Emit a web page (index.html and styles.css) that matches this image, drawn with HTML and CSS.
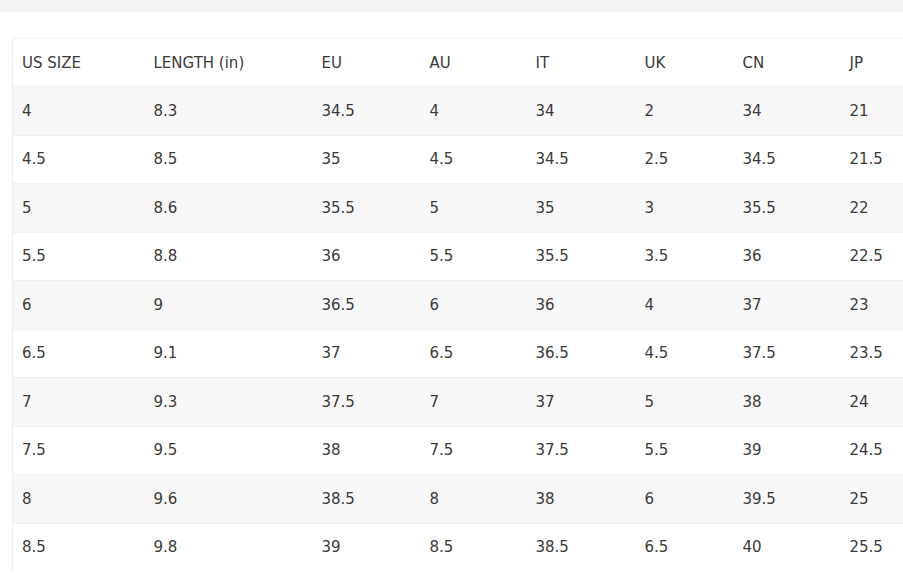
FILE: index.html
```html
<!DOCTYPE html>
<html>
<head>
<meta charset="utf-8">
<link rel="stylesheet" href="styles.css">
</head>
<body>
<div class="topbar"></div>
<div class="wrap">
<table class="sizes">
<colgroup>
<col class="c1"><col class="c2"><col class="c3"><col class="c4"><col class="c5"><col class="c6"><col class="c7"><col class="c8">
</colgroup>
<thead>
<tr><th>US SIZE</th><th>LENGTH (in)</th><th>EU</th><th>AU</th><th>IT</th><th>UK</th><th>CN</th><th>JP</th></tr>
</thead>
<tbody>
<tr><td>4</td><td>8.3</td><td>34.5</td><td>4</td><td>34</td><td>2</td><td>34</td><td>21</td></tr>
<tr><td>4.5</td><td>8.5</td><td>35</td><td>4.5</td><td>34.5</td><td>2.5</td><td>34.5</td><td>21.5</td></tr>
<tr><td>5</td><td>8.6</td><td>35.5</td><td>5</td><td>35</td><td>3</td><td>35.5</td><td>22</td></tr>
<tr><td>5.5</td><td>8.8</td><td>36</td><td>5.5</td><td>35.5</td><td>3.5</td><td>36</td><td>22.5</td></tr>
<tr><td>6</td><td>9</td><td>36.5</td><td>6</td><td>36</td><td>4</td><td>37</td><td>23</td></tr>
<tr><td>6.5</td><td>9.1</td><td>37</td><td>6.5</td><td>36.5</td><td>4.5</td><td>37.5</td><td>23.5</td></tr>
<tr><td>7</td><td>9.3</td><td>37.5</td><td>7</td><td>37</td><td>5</td><td>38</td><td>24</td></tr>
<tr><td>7.5</td><td>9.5</td><td>38</td><td>7.5</td><td>37.5</td><td>5.5</td><td>39</td><td>24.5</td></tr>
<tr><td>8</td><td>9.6</td><td>38.5</td><td>8</td><td>38</td><td>6</td><td>39.5</td><td>25</td></tr>
<tr><td>8.5</td><td>9.8</td><td>39</td><td>8.5</td><td>38.5</td><td>6.5</td><td>40</td><td>25.5</td></tr>
</tbody>
</table>
</div>
</body>
</html>
```
FILE: styles.css
```css
html, body {
  margin: 0;
  padding: 0;
  background: #ffffff;
  overflow: hidden;
}
body {
  font-family: "DejaVu Sans", "Liberation Sans", sans-serif;
  color: #3a3a3a;
  width: 903px;
  height: 578px;
}
.topbar {
  height: 12px;
  background: #f5f5f5;
}
.wrap {
  padding: 26px 0 0 12px;
}
.sizes {
  border-collapse: collapse;
  table-layout: fixed;
  width: 891px;
  border-left: 1px solid #ededed;
  border-top: 1px solid #f0f0f0;
}
.c1 { width: 132px; }
.c2 { width: 168px; }
.c3 { width: 108px; }
.c4 { width: 106px; }
.c5 { width: 109px; }
.c6 { width: 98px; }
.c7 { width: 107px; }
.c8 { width: 63px; }
.sizes th,
.sizes td {
  text-align: left;
  font-weight: normal;
  font-size: 15px;
  padding: 0 0 0 9px;
  height: 47.5px;
  border-bottom: 1px solid #efefef;
  white-space: nowrap;
}
.sizes th {
  height: 47px;
  background: #ffffff;
}
.sizes tbody tr:nth-child(odd) td {
  background: #f8f8f8;
}
.sizes tbody tr:nth-child(even) td {
  background: #ffffff;
}
.sizes tbody tr:last-child td {
  border-bottom: none;
}
```
